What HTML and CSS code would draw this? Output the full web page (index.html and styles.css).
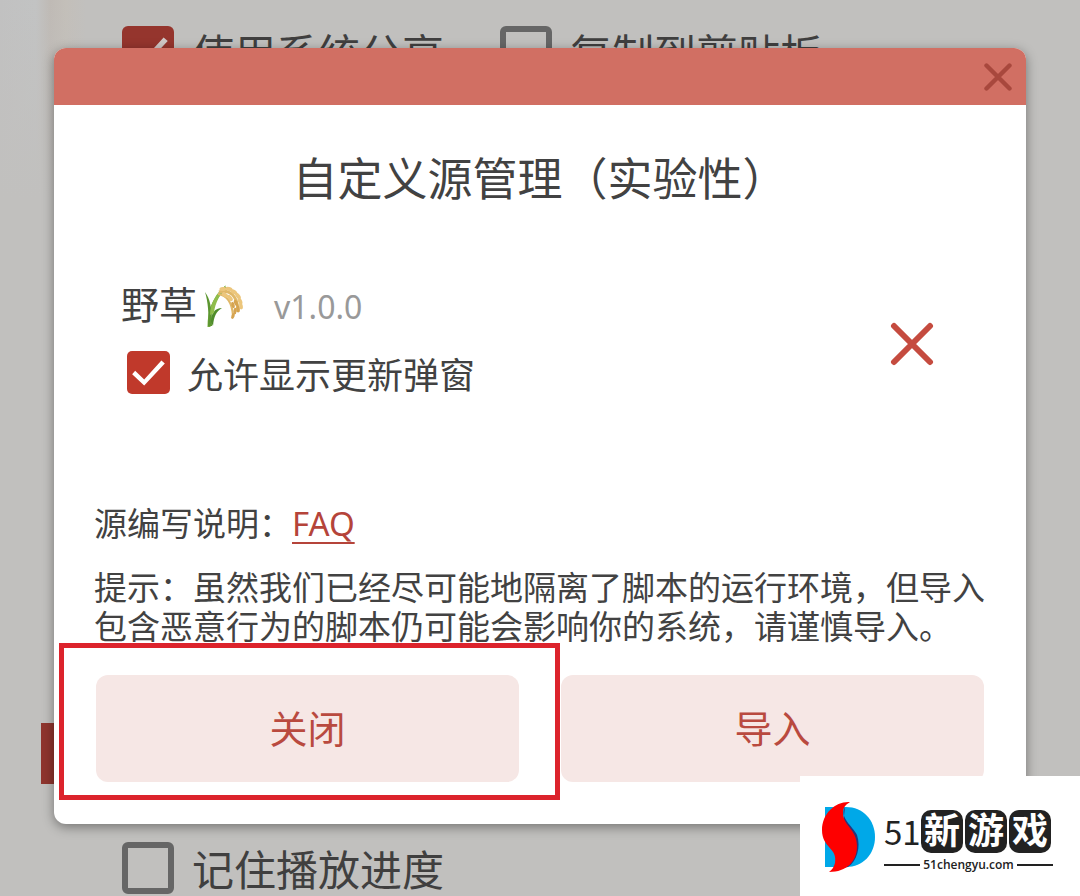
FILE: index.html
```html
<!DOCTYPE html>
<html lang="zh-CN">
<head>
    <meta charset="UTF-8">
    <meta name="viewport" content="width=device-width, initial-scale=1.0">
    <title>自定义源管理</title>
    <link rel="stylesheet" href="styles.css">
</head>
<body>
    <main class="settings">
        <div class="settings-row">
            <label class="option"><input type="checkbox" class="check" checked>使用系统分享</label>
            <label class="option"><input type="checkbox" class="check">复制到剪贴板</label>
        </div>
        <div class="section-mark"></div>
        <div class="settings-row">
            <label class="option"><input type="checkbox" class="check">记住播放进度</label>
        </div>
    </main>

    <div class="overlay">
        <section class="dialog" role="dialog" aria-labelledby="dialog-title">
            <header class="dialog-header">
                <button type="button" class="icon-btn" aria-label="关闭窗口">
                    <svg width="28" height="28" viewBox="0 0 28 28">
                        <path d="M2.5 2.5L25.5 25.5M25.5 2.5L2.5 25.5" stroke="#a8483d" stroke-width="4.4" stroke-linecap="round"/>
                    </svg>
                </button>
            </header>
            <div class="dialog-body">
                <h1 class="title" id="dialog-title">自定义源管理（实验性）</h1>

                <div class="source">
                    <div class="source-info">
                        <div class="source-name">
                            野草<svg class="rice" viewBox="0 0 40 44" role="img" aria-label="稻穗">
                                <path d="M5 43C5 29 8 16 22 3" fill="none" stroke="#72a83c" stroke-width="3"/>
                                <path d="M4 42C5 30 4 18 1 8C6 15 8 23 8 42Z" fill="#5c9630"/>
                                <path d="M7 38C7 29 11 24 18 24C12 28 10 32 9 42Z" fill="#4f8c2b"/>
                                <path d="M6 31C6 20 12 9 22 1C17 10 11 18 10 29Z" fill="#8fbd4b"/>
                                <path d="M15 8C25 5 34 11 34 28" fill="none" stroke="#e0b869" stroke-width="3"/>
                                <path d="M14 10C22 11 28 17 29 32" fill="none" stroke="#e0b869" stroke-width="2"/>
                                <g fill="#ecc67c">
                                    <ellipse cx="19" cy="5" rx="3.6" ry="2" transform="rotate(-8 19 5)"/>
                                    <ellipse cx="25" cy="5" rx="3.6" ry="2" transform="rotate(15 25 5)"/>
                                    <ellipse cx="30" cy="8" rx="3.6" ry="2" transform="rotate(35 30 8)"/>
                                    <ellipse cx="34" cy="12" rx="3.6" ry="2" transform="rotate(50 34 12)"/>
                                    <ellipse cx="36" cy="17" rx="3.6" ry="2" transform="rotate(65 36 17)"/>
                                    <ellipse cx="37" cy="22" rx="3.4" ry="1.8" transform="rotate(80 37 22)"/>
                                    <ellipse cx="21" cy="11" rx="3.6" ry="2" transform="rotate(30 21 11)"/>
                                    <ellipse cx="26" cy="14" rx="3.6" ry="2" transform="rotate(50 26 14)"/>
                                </g>
                                <g fill="#d6a450">
                                    <ellipse cx="32" cy="19" rx="3.4" ry="1.8" transform="rotate(65 32 19)"/>
                                    <ellipse cx="29" cy="21" rx="3.2" ry="1.6" transform="rotate(75 29 21)"/>
                                    <ellipse cx="34" cy="25" rx="3.4" ry="1.8" transform="rotate(85 34 25)"/>
                                    <ellipse cx="31" cy="27" rx="3.2" ry="1.6" transform="rotate(95 31 27)"/>
                                    <ellipse cx="29" cy="32" rx="3" ry="1.6" transform="rotate(110 29 32)"/>
                                </g>
                            </svg>
                            <span class="version">v1.0.0</span>
                        </div>
                        <label class="source-option"><input type="checkbox" class="check check-small" checked>允许显示更新弹窗</label>
                    </div>
                    <button type="button" class="icon-btn" aria-label="移除">
                        <svg width="44" height="44" viewBox="0 0 44 44">
                            <path d="M4 4L40 40M40 4L4 40" stroke="#c54b3f" stroke-width="6" stroke-linecap="round"/>
                        </svg>
                    </button>
                </div>

                <p class="note">源编写说明：<a class="link" href="#faq">FAQ</a></p>
                <p class="hint">提示：虽然我们已经尽可能地隔离了脚本的运行环境，但导入包含恶意行为的脚本仍可能会影响你的系统，请谨慎导入。</p>
            </div>
            <footer class="dialog-footer">
                <div class="marked">
                    <button type="button" class="btn">关闭</button>
                </div>
                <button type="button" class="btn">导入</button>
            </footer>
        </section>
    </div>

    <aside class="watermark">
        <svg width="54" height="72" viewBox="0 0 54 72" aria-hidden="true">
            <path d="M3 6H24C41 6 53 19 53 36C53 53 41 66 24 66H3Z" fill="#00a8e8"/>
            <path d="M23 6C17 17 31 25 35 34C39 46 35 60 26 66L16 68Z" fill="#27357c"/>
            <path d="M28 1C14 0 0 12 0 29C0 47 16 47 13 62C12 66 10 69 7 71C25 71 35 60 35 45C35 28 21 25 21 12C21 7 23 4 28 1Z" fill="#fe0000"/>
        </svg>
        <div class="brand">
            <div class="brand-name">
                <span class="brand-num">51</span>
                <span class="brand-tile">新</span>
                <span class="brand-tile">游</span>
                <span class="brand-tile">戏</span>
            </div>
            <div class="brand-site">51chengyu.com</div>
        </div>
    </aside>
</body>
</html>
```

FILE: styles.css
```css
* {
    box-sizing: border-box;
}
body {
    margin: 0;
    font-family: "Noto Sans", "Noto Sans CJK SC", sans-serif;
    color: #424242;
    background-color: #c1c0be;
    position: relative;
}
button {
    font-family: inherit;
    border: none;
    cursor: pointer;
}

/* settings page behind the dialog */
.settings {
    min-height: 100vh;
    padding: 26px 0 2px;
    display: flex;
    flex-direction: column;
    background-image:
        linear-gradient(to bottom, rgba(193, 192, 190, 0), #c1c0be),
        linear-gradient(to right, #c1c1c1, #c2c3c3 36px, #bfbab5 50px, #c3bfb9 66px, #c1c0be 86px);
    background-size: 86px 200px;
    background-repeat: no-repeat;
}
.settings-row {
    display: flex;
    gap: 56px;
    padding-left: 122px;
}
.option {
    display: flex;
    align-items: flex-start;
    gap: 18px;
    height: 52px;
    font-size: 42px;
    line-height: 56px;
    color: #403f3f;
}
.section-mark {
    width: 120px;
    height: 61px;
    margin: auto 0 58px 41px;
    background-color: #8f352e;
}
.check {
    appearance: none;
    flex: none;
    width: 52px;
    height: 52px;
    margin: 0;
    border: 6px solid #666;
    border-radius: 6px;
}
.check:checked {
    border: none;
    background-color: #95352d;
}
.check:checked::before {
    content: "";
    display: block;
    height: 100%;
    background-color: #d0c8c6;
    clip-path: polygon(12% 54%, 19% 46%, 40% 66%, 80% 22%, 88% 29%, 40% 80%);
}
.check-small {
    width: 43px;
    height: 43px;
    border-radius: 5px;
}
.check-small:checked {
    background-color: #c0392b;
}
.check-small:checked::before {
    background-color: #fff;
}

/* dialog */
.overlay {
    position: absolute;
    top: 0;
    left: 0;
    right: 0;
    padding: 48px 5%;
}
.dialog {
    background-color: #fff;
    border-radius: 12px;
    box-shadow: 0 3px 12px rgba(0, 0, 0, 0.4);
}
.dialog-header {
    display: flex;
    justify-content: flex-end;
    align-items: center;
    height: 57px;
    padding: 0 14px;
    border-radius: 12px 12px 0 0;
    background-color: #d16f63;
}
.icon-btn {
    display: flex;
    padding: 0;
    background: none;
}
.dialog-body {
    padding: 44px 40px 29px;
}
.title {
    margin: 0 0 70px;
    font-size: 45px;
    line-height: 60px;
    font-weight: normal;
    text-align: center;
}
.source {
    display: flex;
    align-items: center;
    justify-content: space-between;
    padding: 0 52px 0 27px;
}
.source-info {
    padding-bottom: 8px;
}
.source-name {
    display: flex;
    align-items: baseline;
    font-size: 38px;
    line-height: 50px;
}
.rice {
    align-self: center;
    width: 40px;
    height: 44px;
    margin-left: 7px;
}
.version {
    margin-left: 30px;
    font-size: 32px;
    color: #999;
}
.source-option {
    display: flex;
    align-items: flex-start;
    gap: 17px;
    margin-top: 19px;
    padding-left: 6px;
    font-size: 36px;
    line-height: 50px;
}
.note {
    margin: 95px 0 24px;
    font-size: 33px;
    line-height: 40px;
}
.link {
    color: #b5443a;
    text-decoration: underline;
    text-decoration-thickness: 2px;
    text-underline-offset: 6px;
    text-decoration-skip-ink: none;
}
.hint {
    margin: 0;
    font-size: 33px;
    line-height: 39px;
}
.dialog-footer {
    display: grid;
    grid-template-columns: 1fr 1fr;
    gap: 42px;
    padding: 0 42px 42px;
}
.btn {
    width: 100%;
    height: 107px;
    padding: 0 6px 4px;
    border-radius: 12px;
    font-size: 38px;
    color: #b94a3f;
    background-color: #f6e7e5;
}
.marked {
    position: relative;
}
/* red frame round the close button */
.marked::after {
    content: "";
    position: absolute;
    inset: -32px -41px -18px -37px;
    border: 5px solid #dc232c;
    pointer-events: none;
}

/* site mark in the corner */
.watermark {
    position: absolute;
    right: 0;
    bottom: 0;
    width: 280px;
    height: 120px;
    padding: 2px 27px 0 22px;
    display: flex;
    align-items: center;
    gap: 8px;
    background-color: #fff;
    color: #222;
}
.brand {
    flex: 1;
    padding-top: 8px;
}
.brand-name {
    display: flex;
    align-items: center;
    gap: 2px;
}
.brand-num {
    width: 35px;
    font-family: "Noto Sans CJK SC", sans-serif;
    font-size: 33px;
    line-height: 42px;
}
.brand-tile {
    width: 42px;
    height: 43px;
    border-radius: 10px;
    font-size: 36px;
    line-height: 42px;
    font-weight: bold;
    text-align: center;
    color: #fff;
    background-color: #222;
}
.brand-site {
    display: flex;
    align-items: center;
    gap: 3px;
    margin-top: 4px;
    font-family: "Open Sans", sans-serif;
    font-size: 12px;
    line-height: 16px;
    font-weight: 600;
}
.brand-site::before,
.brand-site::after {
    content: "";
    flex: 1;
    height: 2px;
    background-color: #222;
}
```
